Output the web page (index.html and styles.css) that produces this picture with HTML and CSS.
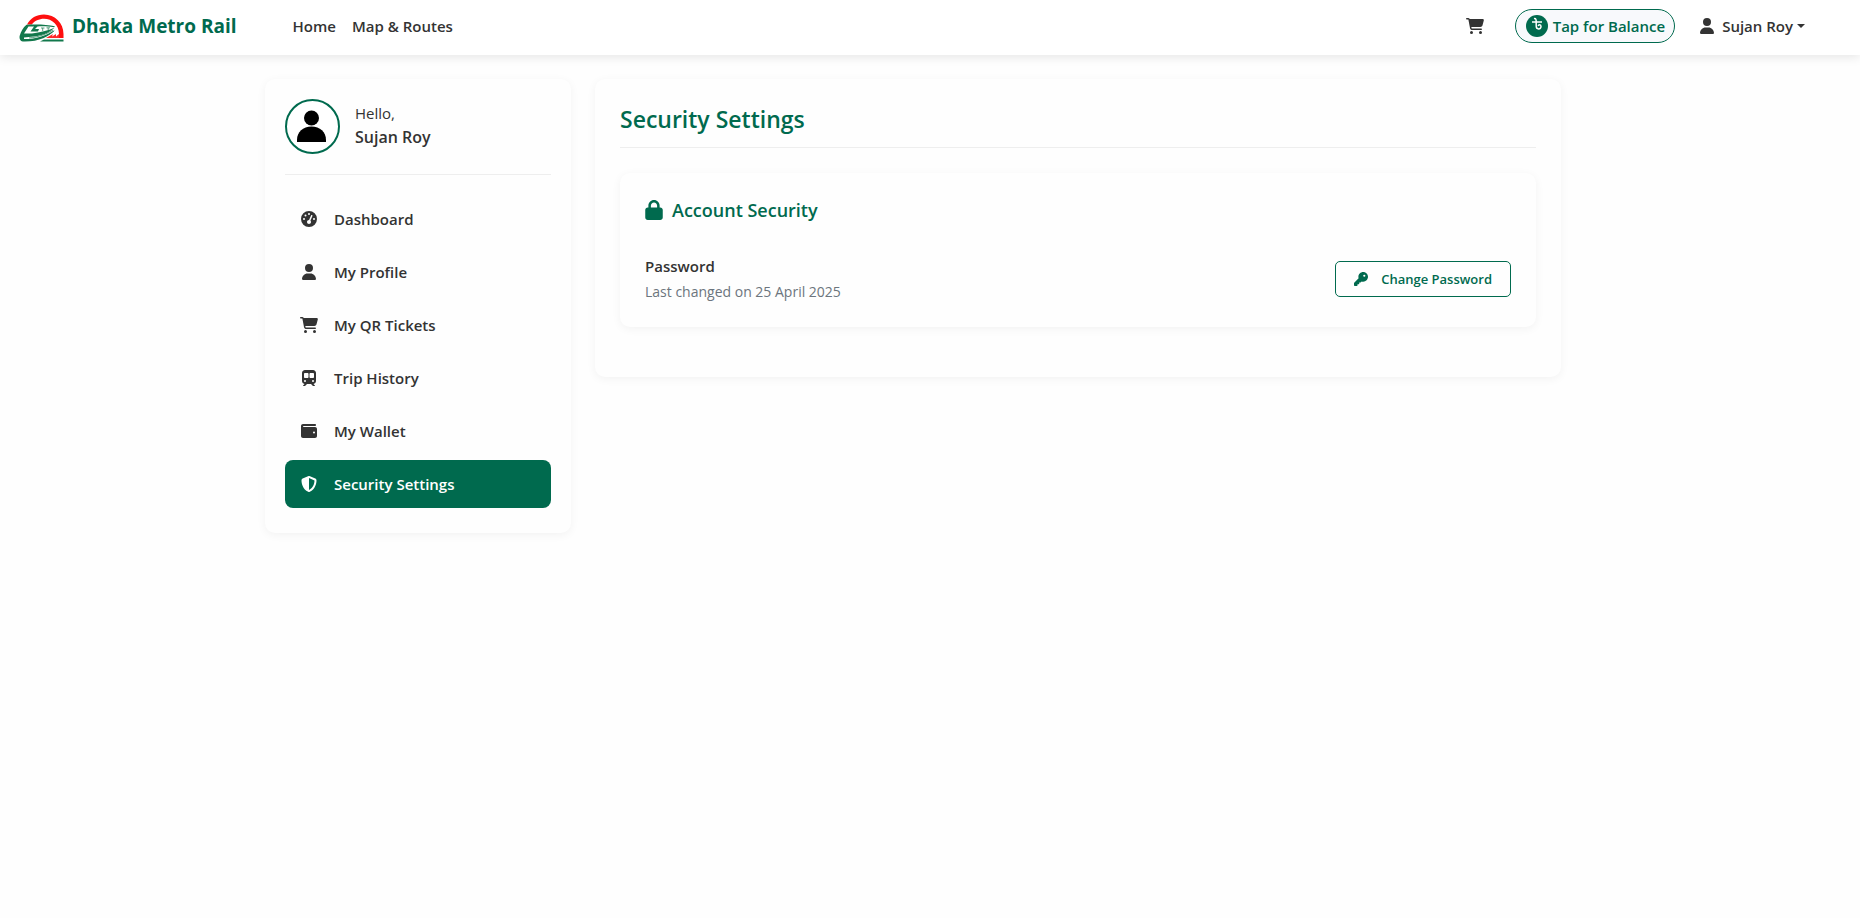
FILE: index.html
```html
<!DOCTYPE html>
<html lang="en">
<head>
<meta charset="utf-8">
<title>Security Settings - Dhaka Metro Rail</title>
<link rel="stylesheet" href="styles.css">
</head>
<body>
<svg class="sprite" aria-hidden="true">
  <symbol id="i-user" viewBox="0 0 448 512"><path d="M224 256A128 128 0 1 0 224 0a128 128 0 1 0 0 256zm-45.7 48C79.8 304 0 383.8 0 482.3C0 498.7 13.3 512 29.7 512H418.3c16.4 0 29.7-13.3 29.7-29.7C448 383.8 368.2 304 269.7 304H178.3z"/></symbol>
  <symbol id="i-cart" viewBox="0 0 576 512"><path d="M0 24C0 10.7 10.7 0 24 0H69.5c22 0 41.5 12.8 50.6 32h411c26.3 0 45.5 25 38.6 50.4l-41 152.3c-8.5 31.4-37 53.3-69.5 53.3H170.7l5.4 28.5c2.2 11.3 12.1 19.5 23.6 19.5H488c13.3 0 24 10.7 24 24s-10.7 24-24 24H199.7c-34.6 0-64.3-24.6-70.7-58.5L77.4 54.5c-.7-3.8-4-6.5-7.9-6.5H24C10.7 48 0 37.3 0 24zM128 464a48 48 0 1 1 96 0 48 48 0 1 1 -96 0zm336-48a48 48 0 1 1 0 96 48 48 0 1 1 0-96z"/></symbol>
  <symbol id="i-gauge" viewBox="0 0 512 512"><path fill-rule="evenodd" d="M0 256a256 256 0 1 1 512 0A256 256 0 1 1 0 256zM288 96a32 32 0 1 0 -64 0 32 32 0 1 0 64 0zM256 416c35.3 0 64-28.7 64-64c0-17.4-6.9-33.1-18.1-44.6L366 161.7c5.3-12.1-.2-26.3-12.3-31.6s-26.3 .2-31.6 12.3L257.9 288c-.6 0-1.3 0-1.9 0c-35.3 0-64 28.7-64 64s28.7 64 64 64zM176 144a32 32 0 1 0 -64 0 32 32 0 1 0 64 0zM96 288a32 32 0 1 0 0-64 32 32 0 1 0 0 64zm352-32a32 32 0 1 0 -64 0 32 32 0 1 0 64 0z"/></symbol>
  <symbol id="i-train" viewBox="0 0 448 512"><path fill-rule="evenodd" d="M96 0C43 0 0 43 0 96V352c0 48 35.2 87.7 81.1 94.9l-46 46C28.1 499.9 33.1 512 43 512H82.7c8.5 0 16.6-3.4 22.6-9.4L160 448H288l54.6 54.6c6 6 14.1 9.4 22.6 9.4H405c10 0 15-12.1 7.9-19.1l-46-46c46-7.1 81.1-46.9 81.1-94.9V96c0-53-43-96-96-96H96zM64 128c0-17.7 14.3-32 32-32h80c17.7 0 32 14.3 32 32v96c0 17.7-14.3 32-32 32H96c-17.7 0-32-14.3-32-32V128zM272 96h80c17.7 0 32 14.3 32 32v96c0 17.7-14.3 32-32 32H272c-17.7 0-32-14.3-32-32V128c0-17.7 14.3-32 32-32zM64 352a32 32 0 1 1 64 0 32 32 0 1 1 -64 0zM320 352a32 32 0 1 1 64 0 32 32 0 1 1 -64 0z"/></symbol>
  <symbol id="i-wallet" viewBox="0 0 512 512"><path fill-rule="evenodd" d="M64 32C28.7 32 0 60.7 0 96V416c0 35.3 28.7 64 64 64H448c35.3 0 64-28.7 64-64V192c0-35.3-28.7-64-64-64H80c-8.8 0-16-7.2-16-16s7.2-16 16-16H448c17.7 0 32-14.3 32-32s-14.3-32-32-32H64zM416 272a32 32 0 1 1 0 64 32 32 0 1 1 0-64z"/></symbol>
  <symbol id="i-shield" viewBox="0 0 512 512"><path fill-rule="evenodd" d="M256 0c4.6 0 9.2 1 13.4 2.9L457.7 82.8c22 9.3 38.4 31 38.3 57.2c-.5 99.2-41.3 280.7-213.6 363.2c-16.7 8-36.1 8-52.8 0C57.3 420.7 16.5 239.2 16 140c-.1-26.2 16.3-47.9 38.3-57.2L242.7 2.9C246.8 1 251.4 0 256 0zm0 66.8V444.8C394 378 431.1 230.1 432 141.4L256 66.8z"/></symbol>
  <symbol id="i-lock" viewBox="0 0 448 512"><path fill-rule="evenodd" d="M144 144v48H304V144c0-44.2-35.8-80-80-80s-80 35.8-80 80zM80 192V144C80 64.5 144.5 0 224 0s144 64.5 144 144v48h16c35.3 0 64 28.7 64 64V448c0 35.3-28.7 64-64 64H64c-35.3 0-64-28.7-64-64V256c0-35.3 28.7-64 64-64H80z"/></symbol>
  <symbol id="i-key" viewBox="0 0 512 512"><path fill-rule="evenodd" d="M336 352c97.2 0 176-78.8 176-176S433.2 0 336 0S160 78.8 160 176c0 18.7 2.9 36.8 8.3 53.7L7 391c-4.5 4.5-7 10.6-7 17v80c0 13.3 10.7 24 24 24h80c13.3 0 24-10.7 24-24V448h40c13.3 0 24-10.7 24-24V384h40c6.4 0 12.5-2.5 17-7l33.3-33.3c16.9 5.4 35 8.3 53.7 8.3zM376 96a40 40 0 1 1 0 80 40 40 0 1 1 0-80z"/></symbol>
</svg>

<header class="topbar">
  <a class="brand" href="#">
    <svg class="brand-logo" viewBox="0 0 45 28" aria-hidden="true">
      <path fill="#fe0f0f" d="M8 10.500C11.500 4 17.500.5 25 .5C36 .5 44.500 9 44.500 20V24H40V20C40 11 33 4.800 25 4.800C20 4.800 15.500 7 12.800 10.500Z"/>
      <path fill="#12784c" d="M7.500 10.800C17 10 28 10.500 36 12.200L35 13.200C29 12.300 23 12 18.500 12.500L16 15H20L19 17.500H11.500L15 12.500H9.500L5 19.500H13C21 18.500 29 16.500 35.500 13.700C31 18 24 21.500 15 22.500L5 23.500L5 25C15 25.500 26 22.500 36 16C30 22.500 20 27.800 5 27.600C1.500 27.600.2 25.500.6 22C2 17.500 4 13.500 7.500 10.800Z"/>
      <path fill="none" stroke="#12784c" stroke-width=".7" d="M22 14H25.500M23.700 14V17M27.500 13.800H31M29.200 14V16M10 24C20 23 28 20 34 16M9 26C20 25.500 30 21 35 17"/>
      <path fill="#fe2a2a" d="M27 24L34 20L33 22.500L37 20V22.500L40 20V24Z"/>
      <path fill="#12784c" d="M21 27.600L25 25.500H44.500V27.600Z"/>
    </svg>
    <span>Dhaka Metro Rail</span>
  </a>
  <nav class="links" aria-label="Main">
    <a href="#">Home</a>
    <a href="#">Map &amp; Routes</a>
  </nav>
  <div class="actions">
    <a class="cart" href="#" aria-label="Cart"><svg class="icon-wide"><use href="#i-cart"/></svg></a>
    <button class="balance" type="button">
      <svg class="taka" viewBox="0 0 22 22" aria-hidden="true"><circle cx="11" cy="11" r="11" fill="#006a4e"/><path fill="none" stroke="#fff" stroke-width="1.500" d="M6 7H16M8 3.700C10 3.200 10.200 4.500 10.200 7V11C10.200 14.800 15 14.800 15 11.500C15 9.200 12.500 9.300 12.200 11"/></svg>
      <span>Tap for Balance</span>
    </button>
    <button class="account" type="button"><svg class="icon"><use href="#i-user"/></svg><span>Sujan Roy</span><i class="caret"></i></button>
  </div>
</header>

<main class="page">
  <div class="layout">
    <aside class="card sidebar">
      <div class="profile">
        <svg class="avatar" viewBox="0 0 55 55" role="img" aria-label="Profile picture"><circle cx="27.500" cy="27.500" r="26.500" fill="#fff" stroke="#006a4e" stroke-width="2"/><circle cx="26.500" cy="19" r="7.500"/><path d="M12 43V41C12 33 18 27.500 26.500 27.500S41 33 41 41V43Z"/></svg>
        <div>
          <p class="hello">Hello,</p>
          <p class="name">Sujan Roy</p>
        </div>
      </div>
      <nav class="menu" aria-label="Account">
        <a href="#"><svg class="icon"><use href="#i-gauge"/></svg>Dashboard</a>
        <a href="#"><svg class="icon"><use href="#i-user"/></svg>My Profile</a>
        <a href="#"><svg class="icon"><use href="#i-cart"/></svg>My QR Tickets</a>
        <a href="#"><svg class="icon"><use href="#i-train"/></svg>Trip History</a>
        <a href="#"><svg class="icon"><use href="#i-wallet"/></svg>My Wallet</a>
        <a class="active" href="#" aria-current="page"><svg class="icon"><use href="#i-shield"/></svg>Security Settings</a>
      </nav>
    </aside>

    <section class="card content">
      <h1>Security Settings</h1>
      <section class="card panel">
        <h2><svg class="lock"><use href="#i-lock"/></svg>Account Security</h2>
        <div class="setting">
          <div>
            <h3>Password</h3>
            <p>Last changed on 25 April 2025</p>
          </div>
          <button class="change" type="button"><svg class="key"><use href="#i-key"/></svg>Change Password</button>
        </div>
      </section>
    </section>
  </div>
</main>
</body>
</html>
```
FILE: styles.css
```css
* { box-sizing: border-box; }
body {
  margin: 0;
  background: #fefefe;
  color: #333;
  font-family: "Segoe UI", "Open Sans", "Noto Sans", sans-serif;
  font-size: 15px;
  line-height: 24px;
}
h1, h2, h3, p { margin: 0; }
a { color: inherit; text-decoration: none; }
button { font: inherit; color: inherit; cursor: pointer; }
svg { fill: currentColor; flex: none; }
.sprite { position: absolute; width: 0; height: 0; }
.icon { width: 16px; height: 16px; }
.icon-wide { width: 18px; height: 16px; }

.topbar {
  display: flex;
  align-items: center;
  height: 55px;
  padding: 0 55px 3px 19px;
  background: #fff;
  box-shadow: 0 2px 10px rgba(0, 0, 0, .1);
  font-weight: 600;
}
.brand {
  display: flex;
  align-items: center;
  gap: 8px;
  color: #006a4e;
  font-size: 19px;
  font-weight: 700;
}
.brand-logo { width: 45px; height: 28px; margin-top: 3px; }
.links { display: flex; gap: 16px; margin-left: 56px; }
.actions { display: flex; align-items: center; margin-left: auto; }
.cart { display: flex; }
.balance {
  display: flex;
  align-items: center;
  gap: 5px;
  height: 34px;
  margin: 0 24px 0 31px;
  padding: 0 9px 0 10px;
  border: 1px solid #006a4e;
  border-radius: 17px;
  background: #f8f9fc;
  color: #006a4e;
}
.taka { width: 22px; height: 22px; }
.account {
  display: flex;
  align-items: center;
  gap: 7px;
  padding: 0;
  border: 0;
  background: none;
}
.caret { border: 4px solid transparent; border-top-color: currentColor; border-bottom: 0; margin-left: -3px; }

.page { padding: 24px 46px 24px 12px; }
.layout {
  display: grid;
  grid-template-columns: minmax(0, 306px) minmax(0, 1fr);
  align-items: start;
  gap: 24px;
  max-width: 1296px;
  margin: 0 auto;
}
.card {
  border-radius: 10px;
  background: #fefefe;
  box-shadow: 0 2px 10px rgba(0, 0, 0, .05);
}
.sidebar { padding: 20px; }
.profile {
  display: flex;
  align-items: center;
  gap: 15px;
  margin-bottom: 20px;
  padding-bottom: 20px;
  border-bottom: 1px solid #eee;
}
.avatar { width: 55px; height: 55px; fill: #000; }
.hello { font-size: 15px; }
.name { font-size: 16px; font-weight: 600; }
.profile div { padding-bottom: 3px; }
.menu a {
  display: flex;
  align-items: center;
  gap: 16px;
  height: 48px;
  margin-bottom: 5px;
  padding: 0 15px;
  border-radius: 8px;
  font-weight: 600;
}
.menu .icon { width: 18px; }
.menu .active { background: #006a4e; color: #fff; }

.content { padding: 25px; }
.content h1 {
  margin-bottom: 25px;
  padding-bottom: 13px;
  border-bottom: 1px solid #eee;
  color: #006a4e;
  font-size: 23px;
  font-weight: 600;
  line-height: 30px;
}
.panel { margin-bottom: 25px; padding: 25px 25px 23px; }
.panel h2 {
  display: flex;
  align-items: center;
  gap: 9px;
  margin-bottom: 32px;
  color: #006a4e;
  font-size: 18px;
  font-weight: 600;
  line-height: 24px;
}
.lock { width: 18px; height: 20px; }
.setting { display: flex; align-items: center; justify-content: space-between; }
.setting h3 { margin-bottom: 2px; font-size: 15px; font-weight: 600; }
.setting p { color: #6c757d; font-size: 14px; }
.change {
  display: flex;
  align-items: center;
  gap: 13px;
  height: 36px;
  padding: 0 18px;
  border: 1px solid #006a4e;
  border-radius: 5px;
  background: transparent;
  color: #006a4e;
  font-size: 13px;
  font-weight: 600;
}
.key { width: 14px; height: 14px; }
```
